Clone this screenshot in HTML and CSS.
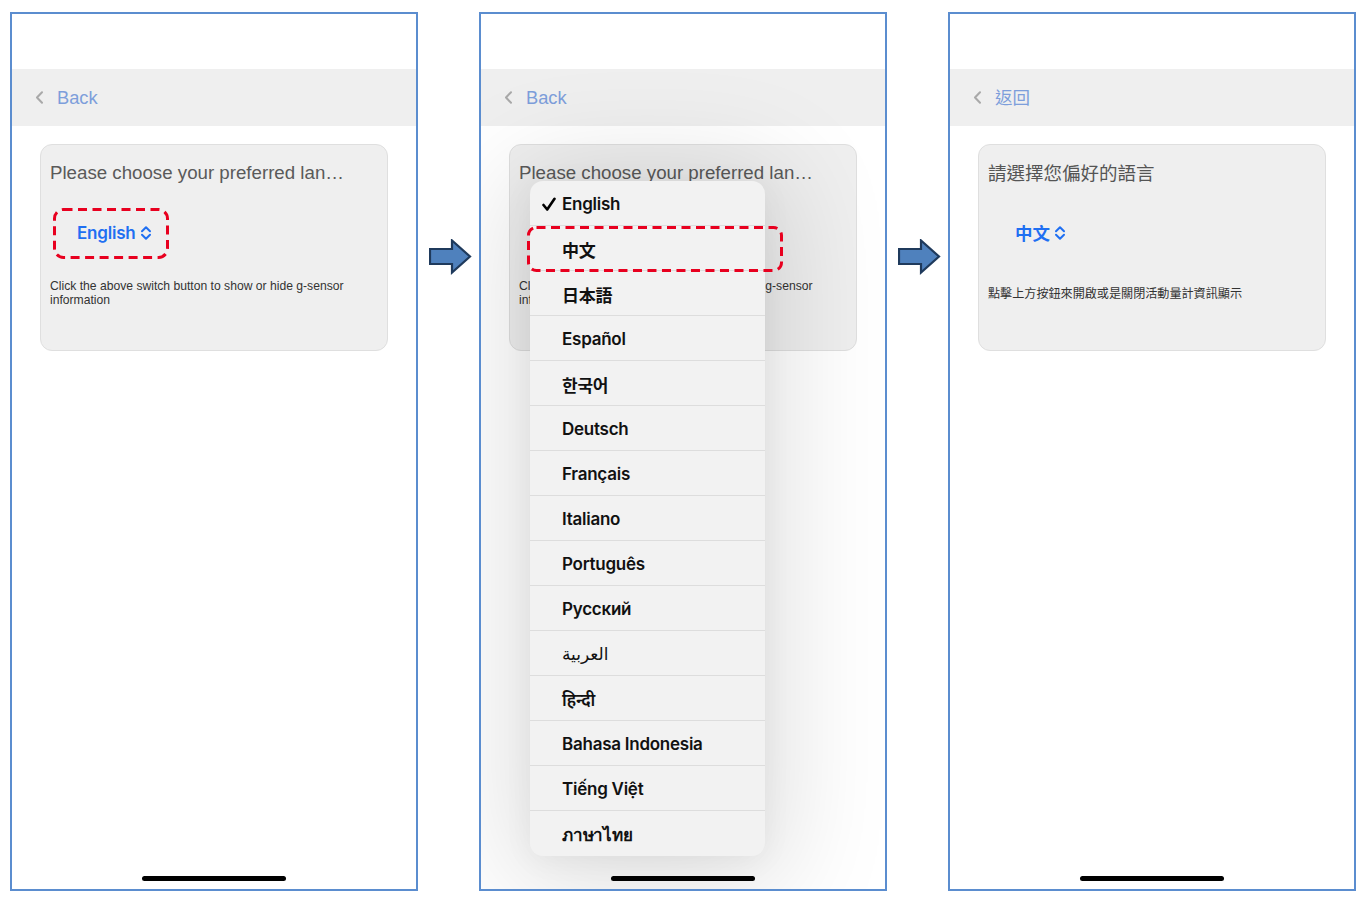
FILE: index.html
```html
<!DOCTYPE html>
<html lang="en">
<head>
<meta charset="utf-8">
<title>Language setting steps</title>
<link rel="stylesheet" href="styles.css">
</head>
<body>
<main class="stage">

  <!-- Step 1 -->
  <section class="phone">
    <div class="status"></div>
    <header class="nav">
      <svg class="nav-chev" viewBox="0 0 9 13" width="9" height="13"><path d="M7 1.2 L2 6.5 L7 11.8" /></svg>
      <span class="back">Back</span>
    </header>
    <div class="card">
      <div class="title" title="Please choose your preferred language">Please choose your preferred lan…</div>
      <div class="picker">
        <span class="picker-label">English</span>
        <svg class="updown" viewBox="0 0 12 16" width="12" height="16"><path d="M2 6.2 L6 2.2 L10 6.2 M2 9.8 L6 13.8 L10 9.8" /></svg>
        <svg class="annot" viewBox="0 0 116 51" width="116" height="51"><rect x="1.5" y="1.5" width="113" height="48" rx="9" ry="9" /></svg>
      </div>
      <div class="desc"><p>Click the above switch button to show or hide g-sensor information</p></div>
    </div>
    <div class="spacer"></div>
    <div class="home"></div>
  </section>

  <div class="arrow-col">
    <svg viewBox="0 0 43 36" width="43" height="36"><polygon points="1,10 23,10 23,1.5 41,17.5 23,33.5 23,25 1,25" /></svg>
  </div>

  <!-- Step 2 -->
  <section class="phone">
    <div class="status"></div>
    <header class="nav">
      <svg class="nav-chev" viewBox="0 0 9 13" width="9" height="13"><path d="M7 1.2 L2 6.5 L7 11.8" /></svg>
      <span class="back">Back</span>
    </header>
    <div class="card">
      <div class="title" title="Please choose your preferred language">Please choose your preferred lan…</div>
      <div class="picker">
        <span class="picker-label">English</span>
        <svg class="updown" viewBox="0 0 12 16" width="12" height="16"><path d="M2 6.2 L6 2.2 L10 6.2 M2 9.8 L6 13.8 L10 9.8" /></svg>
      </div>
      <div class="desc"><p>Click the above switch button to show or hide g-sensor information</p></div>
    </div>
    <div class="spacer"></div>
    <div class="home"></div>

    <ul class="menu">
      <li class="item checked">
        <svg class="check" viewBox="0 0 14 15" width="14" height="15"><path d="M1.5 8 L5.2 12.5 L12.5 1.8" /></svg>
        English
      </li>
      <li class="item">中文
        <svg class="annot2" viewBox="0 0 256 46" width="256" height="46"><rect x="1.5" y="1.5" width="253" height="43" rx="8" ry="8" /></svg>
      </li>
      <li class="item">日本語</li>
      <li class="item">Español</li>
      <li class="item">한국어</li>
      <li class="item">Deutsch</li>
      <li class="item">Français</li>
      <li class="item">Italiano</li>
      <li class="item">Português</li>
      <li class="item">Русский</li>
      <li class="item arabic">العربية</li>
      <li class="item">हिन्दी</li>
      <li class="item">Bahasa Indonesia</li>
      <li class="item">Tiếng Việt</li>
      <li class="item">ภาษาไทย</li>
    </ul>
  </section>

  <div class="arrow-col">
    <svg viewBox="0 0 43 36" width="43" height="36"><polygon points="1,10 23,10 23,1.5 41,17.5 23,33.5 23,25 1,25" /></svg>
  </div>

  <!-- Step 3 -->
  <section class="phone">
    <div class="status"></div>
    <header class="nav">
      <svg class="nav-chev" viewBox="0 0 9 13" width="9" height="13"><path d="M7 1.2 L2 6.5 L7 11.8" /></svg>
      <span class="back cjk">返回</span>
    </header>
    <div class="card">
      <div class="title cjk">請選擇您偏好的語言</div>
      <div class="picker">
        <span class="picker-label cjk">中文</span>
        <svg class="updown" viewBox="0 0 12 16" width="12" height="16"><path d="M2 6.2 L6 2.2 L10 6.2 M2 9.8 L6 13.8 L10 9.8" /></svg>
      </div>
      <div class="desc"><p class="cjk">點擊上方按鈕來開啟或是關閉活動量計資訊顯示</p></div>
    </div>
    <div class="spacer"></div>
    <div class="home"></div>
  </section>

</main>
</body>
</html>
```

FILE: styles.css
```css
* { box-sizing: border-box; }

html, body {
  margin: 0;
  padding: 0;
  background: #ffffff;
}

body {
  font-family: "Liberation Sans", Arial, "Noto Sans CJK TC", sans-serif;
  color: #222;
}

.stage {
  display: flex;
  align-items: flex-start;
  padding: 12px 10px 0 10px;
}

.phone {
  position: relative;
  width: 408px;
  height: 879px;
  border: 2px solid #5b8dcf;
  background: #ffffff;
  display: flex;
  flex-direction: column;
  overflow: hidden;
}

.status {
  height: 55px;
  flex: none;
}

.nav {
  height: 57px;
  flex: none;
  background: #efefef;
  display: flex;
  align-items: center;
  padding-left: 23px;
  gap: 13px;
}

.nav-chev {
  fill: none;
  stroke: #a9a9a9;
  stroke-width: 2;
  stroke-linecap: round;
  stroke-linejoin: round;
}

.back {
  font-size: 18.3px;
  color: #7d9edb;
  line-height: 22px;
}

.back.cjk {
  font-family: "Noto Sans CJK TC", sans-serif;
  font-size: 17.5px;
  color: #7d9edb;
  margin-top: -1px;
}

.card {
  margin: 18px 28px 0 28px;
  height: 207px;
  flex: none;
  background: #efefef;
  border: 1px solid #dfdfdf;
  border-radius: 12px;
  padding: 17px 9px 0 9px;
  display: flex;
  flex-direction: column;
}

.title {
  font-size: 18.7px;
  line-height: 22px;
  color: #5a5a5a;
  white-space: nowrap;
}

.title.cjk {
  font-family: "Noto Sans CJK TC", sans-serif;
  font-size: 18.5px;
  color: #555;
  margin-top: -1px;
  margin-bottom: 1px;
}

.picker {
  position: relative;
  margin-top: 24px;
  margin-left: 3px;
  width: 116px;
  height: 51px;
  display: flex;
  align-items: center;
  padding-left: 24px;
  padding-bottom: 2px;
  gap: 4px;
}

.picker-label {
  font-family: "Inter", "Liberation Sans", sans-serif;
  font-weight: 600;
  font-size: 17px;
  color: #1f6ff2;
  letter-spacing: -0.2px;
}

.picker-label.cjk {
  font-family: "Noto Sans CJK TC", sans-serif;
  font-weight: 700;
  font-size: 17.5px;
  letter-spacing: 0;
}

.updown {
  fill: none;
  stroke: #1f6ff2;
  stroke-width: 2;
  stroke-linecap: round;
  stroke-linejoin: round;
}

.annot {
  position: absolute;
  left: 0;
  top: 0;
  fill: none;
  stroke: #e8001f;
  stroke-width: 3;
  stroke-dasharray: 9 5.5;
}

.desc {
  margin-top: 6px;
  height: 56px;
  display: flex;
  align-items: center;
}

.desc p {
  margin: 0;
  width: 300px;
  font-size: 12.15px;
  line-height: 14px;
  color: #333;
}

.desc p.cjk {
  font-family: "Noto Sans CJK TC", sans-serif;
  width: auto;
  white-space: nowrap;
  font-size: 12.1px;
}

.spacer { flex: 1; }

.home {
  flex: none;
  align-self: center;
  width: 144px;
  height: 5px;
  border-radius: 3px;
  background: #000;
  margin-bottom: 8px;
}

.arrow-col {
  width: 61px;
  flex: none;
  padding-top: 227px;
  padding-left: 11px;
}

.arrow-col polygon {
  fill: #4f81bd;
  stroke: #1f3a5c;
  stroke-width: 2.2;
  stroke-linejoin: miter;
}

/* Pop-up menu (step 2) */
.menu {
  position: absolute;
  left: 49px;
  top: 167px;
  width: 235px;
  margin: 0;
  padding: 0;
  list-style: none;
  background: #f2f2f2;
  border-radius: 13px;
  box-shadow: 0 10px 110px 20px rgba(0, 0, 0, 0.13), 0 4px 30px rgba(0, 0, 0, 0.05);
}

.item {
  position: relative;
  height: 45px;
  display: flex;
  align-items: center;
  padding-left: 32px;
  padding-top: 2px;
  border-bottom: 1px solid #dddddd;
  font-family: "Inter", "Noto Sans", "DejaVu Sans", "Noto Sans CJK JP", "Noto Sans CJK KR", sans-serif;
  font-weight: 600;
  font-size: 17px;
  color: #111;
  letter-spacing: -0.25px;
}

.item.arabic {
  font-weight: 400;
  letter-spacing: 0;
}

.item:last-child { border-bottom: none; }

.check {
  position: absolute;
  left: 12px;
  top: 16px;
  fill: none;
  stroke: #000;
  stroke-width: 2.6;
  stroke-linecap: round;
  stroke-linejoin: round;
}

.annot2 {
  position: absolute;
  left: -3px;
  top: 0;
  fill: none;
  stroke: #e8001f;
  stroke-width: 3;
  stroke-dasharray: 9 5.5;
}
```
